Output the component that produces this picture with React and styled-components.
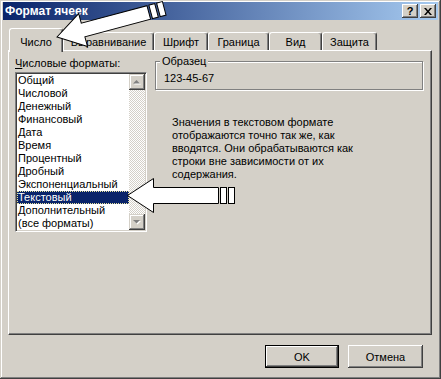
import React from "react";
import styled, { createGlobalStyle } from "styled-components";

const face = "#d4d0c8";
const shadow = "#808080";
const dark = "#404040";

const GlobalStyle = createGlobalStyle`
  html, body {
    margin: 0;
    padding: 0;
    background: ${face};
  }
  body {
    font-family: "Liberation Sans", Arial, sans-serif;
    font-size: 11px;
    color: #000;
  }
  * {
    box-sizing: border-box;
  }
`;

const Window = styled.div`
  position: relative;
  width: 441px;
  height: 379px;
  padding: 2px 3px 3px;
  display: flex;
  flex-direction: column;
  background: ${face};
  box-shadow: inset -1px -1px ${dark}, inset 1px 1px ${face},
    inset -2px -2px ${shadow}, inset 2px 2px #fff;
`;

const TitleBar = styled.div`
  height: 18px;
  display: flex;
  align-items: center;
  justify-content: space-between;
  padding: 0 2px 0 2px;
  background: linear-gradient(to right, #0a246a, #a6caf0);
`;

const Title = styled.span`
  color: #fff;
  font-weight: bold;
  font-size: 12px;
`;

const CaptionButtons = styled.div`
  display: flex;
  gap: 2px;
`;

const CaptionButton = styled.div`
  width: 16px;
  height: 14px;
  display: flex;
  align-items: center;
  justify-content: center;
  background: ${face};
  font-weight: bold;
  font-size: 11px;
  line-height: 1;
  box-shadow: inset -1px -1px ${dark}, inset 1px 1px #fff,
    inset -2px -2px ${shadow}, inset 2px 2px ${face};
`;

const Body = styled.div`
  display: flex;
  flex-direction: column;
  padding: 8px 6px 0 5px;
`;

const TabStrip = styled.div`
  position: relative;
  z-index: 1;
  height: 22px;
  display: flex;
  align-items: flex-end;
  padding-left: 1px;
`;

const Tab = styled.div`
  width: ${(p) => p.$w}px;
  height: ${(p) => (p.$active ? 24 : 18)}px;
  margin-bottom: ${(p) => (p.$active ? -2 : 0)}px;
  padding-top: ${(p) => (p.$active ? 7 : 3)}px;
  text-align: center;
  line-height: 13px;
  background: ${face};
  border-top: 1px solid #fff;
  border-left: 1px solid #fff;
  border-right: 1px solid ${dark};
  border-radius: 3px 3px 0 0;
  box-shadow: inset -1px 0 ${shadow};
`;

const Panel = styled.div`
  height: 285px;
  display: flex;
  gap: 8px;
  padding: 6px 6px 0 6px;
  border-top: 1px solid #fff;
  border-left: 1px solid #fff;
  border-right: 1px solid ${dark};
  border-bottom: 1px solid ${dark};
  box-shadow: inset -1px -1px ${shadow};
`;

const FormatsColumn = styled.div`
  width: 132px;
  display: flex;
  flex-direction: column;
`;

const Label = styled.div`
  line-height: 13px;
  white-space: nowrap;

  & u {
    text-decoration-thickness: 1px;
  }
`;

const ListBox = styled.div`
  width: 132px;
  height: 160px;
  margin-top: 2px;
  padding: 1px;
  display: flex;
  background: #fff;
  border: 1px solid;
  border-color: ${shadow} #fff #fff ${shadow};
  box-shadow: inset 1px 1px ${dark}, inset -1px -1px ${face};
`;

const Items = styled.div`
  flex: 1;
  display: flex;
  flex-direction: column;
`;

const Item = styled.div`
  height: 13px;
  line-height: 13px;
  padding-left: 1px;
  white-space: nowrap;
  background: ${(p) => (p.$selected ? "#0a246a" : "transparent")};
  color: ${(p) => (p.$selected ? "#fff" : "#000")};
  outline: ${(p) => (p.$selected ? "1px dotted #e8e4a0" : "none")};
  outline-offset: -1px;
`;

const ScrollBar = styled.div`
  width: 16px;
  display: flex;
  flex-direction: column;
  justify-content: space-between;
  background-color: #fff;
  background-image: repeating-conic-gradient(${face} 0 25%, #fff 0 50%);
  background-size: 2px 2px;
`;

const ScrollButton = styled.div`
  width: 16px;
  height: 16px;
  display: flex;
  align-items: center;
  justify-content: center;
  background: ${face};
  box-shadow: inset -1px -1px ${dark}, inset 1px 1px ${face},
    inset -2px -2px ${shadow}, inset 2px 2px #fff;
`;

const InfoColumn = styled.div`
  flex: 1;
  margin-top: -2px;
  display: flex;
  flex-direction: column;
`;

const GroupBox = styled.fieldset`
  width: 268px;
  margin: 0;
  padding: 0;
  border: 1px solid ${shadow};
  box-shadow: inset 1px 1px #fff, 1px 1px #fff;
`;

const Legend = styled.legend`
  margin-left: 4px;
  padding: 0 2px;
  line-height: 13px;
  background: ${face};
`;

const Sample = styled.div`
  padding: 4px 8px 4px;
  line-height: 13px;
`;

const Description = styled.p`
  margin: 26px 0 0;
  padding-left: 17px;
  line-height: 13px;
`;

const Footer = styled.div`
  display: flex;
  justify-content: flex-end;
  gap: 9px;
  padding: 10px 9px 0 0;
`;

const Button = styled.button`
  width: ${(p) => p.$w}px;
  height: 23px;
  padding: 0;
  font: inherit;
  color: #000;
  background: ${face};
  border: ${(p) => (p.$default ? "1px solid #000" : "none")};
  box-shadow: inset -1px -1px ${dark}, inset 1px 1px #fff,
    inset -2px -2px ${shadow}, inset 2px 2px ${face};
`;

const Overlay = styled.svg`
  position: absolute;
  left: 0;
  top: 0;
  pointer-events: none;
  z-index: 5;
`;

function Arrow({ x, y, angle, head, half, shaft, len, bar }) {
  const pts = [
    [0, 0],
    [head, -half],
    [head, -shaft],
    [len, -shaft],
    [len, shaft],
    [head, shaft],
    [head, half],
  ]
    .map((p) => p.join(","))
    .join(" ");
  return (
    <g transform={`translate(${x} ${y}) rotate(${angle})`}>
      <polygon points={pts} fill="#fff" stroke="#000" strokeWidth="1" />
      <rect x={len + 2} y={-shaft} width={bar} height={shaft * 2} fill="#fff" stroke="#000" />
      <rect x={len + 4 + bar} y={-shaft} width={bar} height={shaft * 2} fill="#fff" stroke="#000" />
    </g>
  );
}

function ArrowGlyph({ down }) {
  const pts = down ? "4,6 11,6 7.5,9.5" : "4,9.5 11,9.5 7.5,6";
  return (
    <svg width="16" height="16" viewBox="0 0 16 16">
      <polygon points={pts} transform="translate(1 1)" fill="#fff" />
      <polygon points={pts} fill={shadow} />
    </svg>
  );
}

const tabs = [
  { name: "Число", w: 54 },
  { name: "Выравнивание", w: 91 },
  { name: "Шрифт", w: 54 },
  { name: "Граница", w: 61 },
  { name: "Вид", w: 53 },
  { name: "Защита", w: 55 },
];

const formats = [
  "Общий",
  "Числовой",
  "Денежный",
  "Финансовый",
  "Дата",
  "Время",
  "Процентный",
  "Дробный",
  "Экспоненциальный",
  "Текстовый",
  "Дополнительный",
  "(все форматы)",
];

export default function App() {
  const selected = "Текстовый";

  return (
    <>
      <GlobalStyle />
      <Window>
        <TitleBar>
          <Title>Формат ячеек</Title>
          <CaptionButtons>
            <CaptionButton>?</CaptionButton>
            <CaptionButton>
              <svg width="8" height="7" viewBox="0 0 8 7">
                <path d="M0 0h2l2 2.5L6 0h2L5 3.5 8 7H6L4 4.5 2 7H0l3-3.5z" fill="#000" />
              </svg>
            </CaptionButton>
          </CaptionButtons>
        </TitleBar>

        <Body>
          <TabStrip>
            {tabs.map((t, i) => (
              <Tab key={t.name} $w={t.w} $active={i === 0}>
                {t.name}
              </Tab>
            ))}
          </TabStrip>

          <Panel>
            <FormatsColumn>
              <Label>
                <u>Ч</u>исловые форматы:
              </Label>
              <ListBox>
                <Items>
                  {formats.map((f) => (
                    <Item key={f} $selected={f === selected}>
                      {f}
                    </Item>
                  ))}
                </Items>
                <ScrollBar>
                  <ScrollButton>
                    <ArrowGlyph />
                  </ScrollButton>
                  <ScrollButton>
                    <ArrowGlyph down />
                  </ScrollButton>
                </ScrollBar>
              </ListBox>
            </FormatsColumn>

            <InfoColumn>
              <GroupBox>
                <Legend>Образец</Legend>
                <Sample>123-45-67</Sample>
              </GroupBox>
              <Description>
                Значения в текстовом формате
                <br />
                отображаются точно так же, как
                <br />
                вводятся. Они обрабатываются как
                <br />
                строки вне зависимости от их
                <br />
                содержания.
              </Description>
            </InfoColumn>
          </Panel>

          <Footer>
            <Button $w={74} $default>
              OK
            </Button>
            <Button $w={75}>Отмена</Button>
          </Footer>
        </Body>

        <Overlay width="441" height="379" viewBox="0 0 441 379">
          <Arrow x={57} y={37} angle={-15} head={27} half={17} shaft={7} len={95} bar={6} />
          <Arrow x={127.5} y={195.5} angle={0} head={26} half={17} shaft={8} len={91} bar={6} />
        </Overlay>
      </Window>
    </>
  );
}
